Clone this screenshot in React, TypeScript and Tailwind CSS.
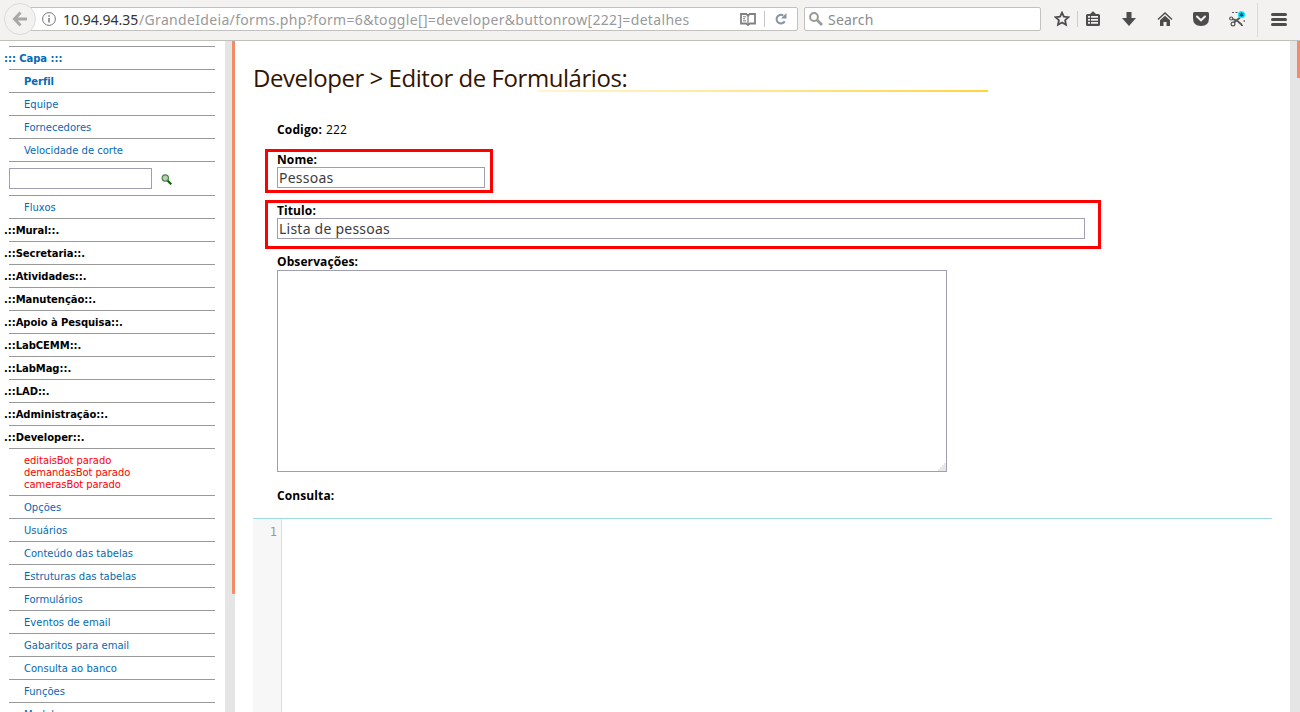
import type { ReactNode } from 'react';

type Row = { text: string; kind: 'root' | 'bold' | 'link' | 'section' };

const rowStyle = {
  root: '-ml-[5px] font-bold tracking-[-0.05px] text-[#0669b2]',
  bold: 'pl-[15px] font-bold tracking-[-0.05px] text-[#0669b2]',
  link: 'pl-[15px] text-[#0669b2]',
  section: '-ml-[5px] font-bold tracking-[-0.05px] text-black',
};

const link = (text: string): Row => ({ text, kind: 'link' });
const section = (text: string): Row => ({ text: `.::${text}::.`, kind: 'section' });

const topRows: Row[] = [
  { text: '::: Capa :::', kind: 'root' },
  { text: 'Perfil', kind: 'bold' },
  link('Equipe'),
  link('Fornecedores'),
  link('Velocidade de corte'),
];

const middleRows: Row[] = [
  link('Fluxos'),
  section('Mural'),
  section('Secretaria'),
  section('Atividades'),
  section('Manutenção'),
  section('Apoio à Pesquisa'),
  section('LabCEMM'),
  section('LabMag'),
  section('LAD'),
  section('Administração'),
  section('Developer'),
];

const developerRows: Row[] = [
  'Opções',
  'Usuários',
  'Conteúdo das tabelas',
  'Estruturas das tabelas',
  'Formulários',
  'Eventos de email',
  'Gabaritos para email',
  'Consulta ao banco',
  'Funções',
  'Modelos',
].map(link);

function MenuRows({ rows }: { rows: Row[] }) {
  return (
    <>
      {rows.map((r) => (
        <li key={r.text} className="h-[23px] shrink-0 border-t border-[#999999]">
          <a className={`block leading-[23px] whitespace-nowrap ${rowStyle[r.kind]}`}>{r.text}</a>
        </li>
      ))}
    </>
  );
}

function Icon({ children, className }: { children: ReactNode; className: string }) {
  return (
    <svg viewBox="0 0 16 16" className={`size-4 shrink-0 ${className}`} fill="#4c4c4c">
      {children}
    </svg>
  );
}

function Toolbar() {
  return (
    <header className="flex h-[41px] shrink-0 items-start border-b border-[#c1bfbb] bg-[#f3f2f1] font-['Noto_Sans',sans-serif] text-[14px] text-[#333]">
      <div className="z-10 mt-[3px] ml-1 flex size-8 shrink-0 items-center justify-center rounded-full border border-[#dddbd9] bg-[#f3f2f1]">
        <svg viewBox="0 0 16 16" className="size-4" fill="none" stroke="#a9a8a6" strokeWidth="3">
          <path d="M8.5 1.5 2.5 8l6 6.5M2.5 8H15" />
        </svg>
      </div>
      <div className="mt-[7px] -ml-[7px] flex h-6 w-[769px] shrink-0 items-center rounded-[2px] border border-[#c3c1bd] bg-white">
        <svg viewBox="0 0 14 14" className="ml-[12px] size-[14px] shrink-0" fill="none" stroke="#777">
          <circle cx="7" cy="7" r="6.4" />
          <path d="M7 6v4.5M7 3.2v1.6" strokeWidth="1.5" />
        </svg>
        <span className="ml-[7px] w-[76px] shrink-0 pt-[2px] leading-[22px] whitespace-nowrap">10.94.94.35</span>
        <span className="w-[553px] shrink-0 pt-[2px] leading-[22px] tracking-[0.33px] whitespace-nowrap text-[#999]">
          /GrandeIdeia/forms.php?form=6&amp;toggle[]=developer&amp;buttonrow[222]=detalhes
        </span>
        <svg viewBox="0 0 16 13" className="ml-[48px] h-[13px] w-4 shrink-0" fill="none" stroke="#808080">
          <path d="M1 1h5.2L8 2.5 9.8 1H15v9.5H10L8 12l-2-1.500H1z" strokeWidth="1.8" />
          <path d="M8 2.500V11" strokeWidth="1.3" />
          <path d="M3 3.800h3M3 5.800h2M3 7.800h3" strokeWidth="1" />
        </svg>
        <span className="ml-[8px] h-4 w-px shrink-0 bg-[#c8c8c8]" />
        <svg viewBox="0 0 12 12" className="ml-[10px] size-3 shrink-0">
          <path d="M8.300 2.600A4.300 4.300 0 1 0 9.700 8.200" fill="none" stroke="#8795a3" strokeWidth="2" />
          <path d="M11.500 0v5.500H6z" fill="#8795a3" />
        </svg>
      </div>
      <div className="mt-[7px] ml-[6px] flex h-6 w-[237px] shrink-0 items-center rounded-[2px] border border-[#c3c1bd] bg-white text-[#8c8c8c]">
        <svg viewBox="0 0 14 14" className="ml-[4px] size-[14px] shrink-0" fill="none" stroke="#999">
          <circle cx="5" cy="5" r="3.900" strokeWidth="2" />
          <path d="m8 8 5 5" strokeWidth="2.600" />
        </svg>
        <span className="ml-[5px] pt-[2px] leading-[22px] tracking-[0.2px]">Search</span>
      </div>
      <Icon className="mt-[11px] ml-[13px]">
        <path
          d="m8 1.600 1.900 4.100 4.500.500-3.300 3 .9 4.500L8 11.500l-4 2.200.9-4.500-3.300-3 4.500-.500z"
          fill="none"
          stroke="#4c4c4c"
          strokeWidth="1.800"
        />
      </Icon>
      <span className="mt-[11px] ml-[7px] h-4 w-px shrink-0 bg-[#cfcdca]" />
      <Icon className="mt-[11px] ml-[7px]">
        <path
          fillRule="evenodd"
          d="M1 4.500Q1 3 2.500 3H5L8 .300 11 3h2.500Q15 3 15 4.500v9q0 1.500-1.500 1.500h-11Q1 15 1 13.500zM3 5v1.800h2V5zm3 0v1.800h7V5zM3 8v1.800h2V8zm3 0v1.800h7V8zm-3 3v1.800h2V11zm3 0v1.800h7V11z"
        />
      </Icon>
      <Icon className="mt-[11px] ml-[20px]">
        <path d="M5.500 1h5v6H15l-7 8-7-8h4.500z" />
      </Icon>
      <Icon className="mt-[11px] ml-[20px]">
        <path d="m8 4.800 5 4.500V15H9.500v-4h-3v4H3V9.300z" />
        <path d="M1 8.600 8 2l7 6.600" fill="none" stroke="#4c4c4c" strokeWidth="1.400" />
      </Icon>
      <Icon className="mt-[11px] ml-[20px]">
        <path d="M1.500 1h13Q16 1 16 2.500V7q0 8-8 8T0 7V2.500Q0 1 1.500 1z" />
        <path d="M4 5.500 8 9.300l4-3.800" fill="none" stroke="#f3f2f1" strokeWidth="2" strokeLinecap="round" />
      </Icon>
      <svg viewBox="0 0 16 16" className="mt-[11px] ml-[20px] size-4 shrink-0" fill="none" stroke="#555">
        <path d="M3 1.500h6M15.200 9v3M12 14.500h3" strokeDasharray="2 1.500" />
        <circle cx="2.200" cy="7.500" r="1.500" strokeWidth="1.200" />
        <circle cx="4" cy="13" r="1.900" strokeWidth="1.200" />
        <path d="M3.500 8.200 8 9.500l5 4.500M5 11.500l6-5" strokeWidth="1.800" />
        <circle cx="12.500" cy="3.700" r="3.600" fill="#00f0ff" stroke="none" />
        <path d="M12.500 1.400v4.600M10.500 2.500l4 2.400M14.500 2.500l-4 2.400" stroke="#1b4a7a" strokeWidth="1.200" />
      </svg>
      <span className="mt-[3px] ml-[12px] h-[34px] w-px shrink-0 bg-[#dddbd9]" />
      <div className="mt-[13px] ml-[13px] flex w-4 shrink-0 flex-col gap-[2px]">
        <span className="h-[3px] rounded-full bg-[#4c4c4c]" />
        <span className="h-[3px] rounded-full bg-[#4c4c4c]" />
        <span className="h-[3px] rounded-full bg-[#4c4c4c]" />
      </div>
    </header>
  );
}

function Sidebar() {
  return (
    <nav className="w-[225px] shrink-0 overflow-hidden pt-[5px] pr-[10px] pl-[9px] font-['DejaVu_Sans',sans-serif] text-[10px]">
      <ul className="flex flex-col">
        <MenuRows rows={topRows} />
        <li className="flex h-[34px] shrink-0 items-start border-t border-[#999999] pt-[6px]">
          <input className="h-[21px] w-[143px] border border-[#a09fb1] bg-white px-1" />
          <svg viewBox="0 0 11 11" className="mt-[6px] ml-[9px] size-[11px]" fill="none">
            <path d="m6 6 4.300 4.300" stroke="#12600f" strokeWidth="2.200" />
            <circle cx="4.300" cy="4" r="3.200" fill="#b9cfb8" stroke="#4b854a" strokeWidth="1.200" />
          </svg>
        </li>
        <MenuRows rows={middleRows} />
        <li className="h-[47px] shrink-0 border-t border-[#999999] pt-[6px] pl-[15px] leading-3 tracking-[-0.08px] text-[#ff0000]">
          <p>editaisBot parado</p>
          <p>demandasBot parado</p>
          <p>camerasBot parado</p>
        </li>
        <MenuRows rows={developerRows} />
      </ul>
    </nav>
  );
}

const label = 'block text-[12px] font-bold tracking-[0.1px]';
const field =
  "block h-[21px] border border-[#a09fb1] bg-white px-px font-['Noto_Sans',sans-serif] text-[14px] tracking-[0.23px] text-[#3c3c3c] outline-none";

function Editor() {
  return (
    <main className="flex w-[1055px] shrink-0 flex-col overflow-hidden bg-white pl-[18px] font-['Open_Sans',sans-serif] text-black">
      <h1 className="h-[49px] shrink-0 pt-[21px] text-[24px] leading-[32px] tracking-[-0.45px] whitespace-nowrap text-[#331400]">
        Developer &gt; Editor de Formulários:
      </h1>
      <div className="ml-[285px] h-[2px] w-[450px] shrink-0 bg-linear-to-r from-[#fff5d0] to-[#ffd535]" />
      <p className="flex h-[57px] shrink-0 gap-[4px] pt-[28px] pl-6 text-[12px] leading-5 tracking-[0.15px]">
        <b>Codigo:</b>
        <span>222</span>
      </p>
      <div className="ml-[12px] h-[44px] w-[228px] shrink-0 border-[3px] border-[#ff0000] pl-[9px]">
        <label className={`${label} h-[15px] leading-[15px]`}>Nome:</label>
        <input className={`${field} w-[208px]`} defaultValue="Pessoas" />
      </div>
      <div className="mt-[7px] ml-[12px] h-[49px] w-[836px] shrink-0 border-[3px] border-[#ff0000] pl-[9px]">
        <label className={`${label} h-[15px] leading-[15px]`}>Titulo:</label>
        <input className={`${field} w-[808px]`} defaultValue="Lista de pessoas" />
      </div>
      <div className="mt-[4px] shrink-0 pl-6">
        <label className={`${label} h-[17px] leading-[17px]`}>Observações:</label>
        <div className="flex h-[202px] w-[670px] items-end justify-end border border-[#a09fb1] bg-white">
          <svg viewBox="0 0 9 9" className="size-[9px]" fill="#e6e6ea">
            <path d="M9 1v8H1V7h2V5h2V3h2V1z" />
          </svg>
        </div>
        <p className={`${label} mt-[14px] h-[32px] leading-5`}>Consulta:</p>
      </div>
      <div className="flex w-[1019px] grow border-t border-[#9fd8e6]">
        <div className="w-[29px] border-r border-[#dddddd] bg-[#f7f7f7] pt-[5px] pr-[4px] text-right font-['DejaVu_Sans_Mono',monospace] text-[12px] leading-[16px] text-[#999]">
          1
        </div>
      </div>
    </main>
  );
}

export default function App() {
  return (
    <div className="flex h-[712px] w-[1300px] flex-col overflow-hidden bg-white">
      <Toolbar />
      <div className="flex min-h-0 grow">
        <Sidebar />
        <div className="flex w-[10px] shrink-0 justify-end bg-[#e5e5e5]">
          <div className="h-[553px] w-[3px] rounded-b-[1px] bg-[#f08c68]" />
        </div>
        <Editor />
        <div className="flex w-[10px] shrink-0 justify-end bg-[#e5e5e5]">
          <div className="h-[37px] w-[3px] bg-[#f08c68]" />
        </div>
      </div>
    </div>
  );
}
